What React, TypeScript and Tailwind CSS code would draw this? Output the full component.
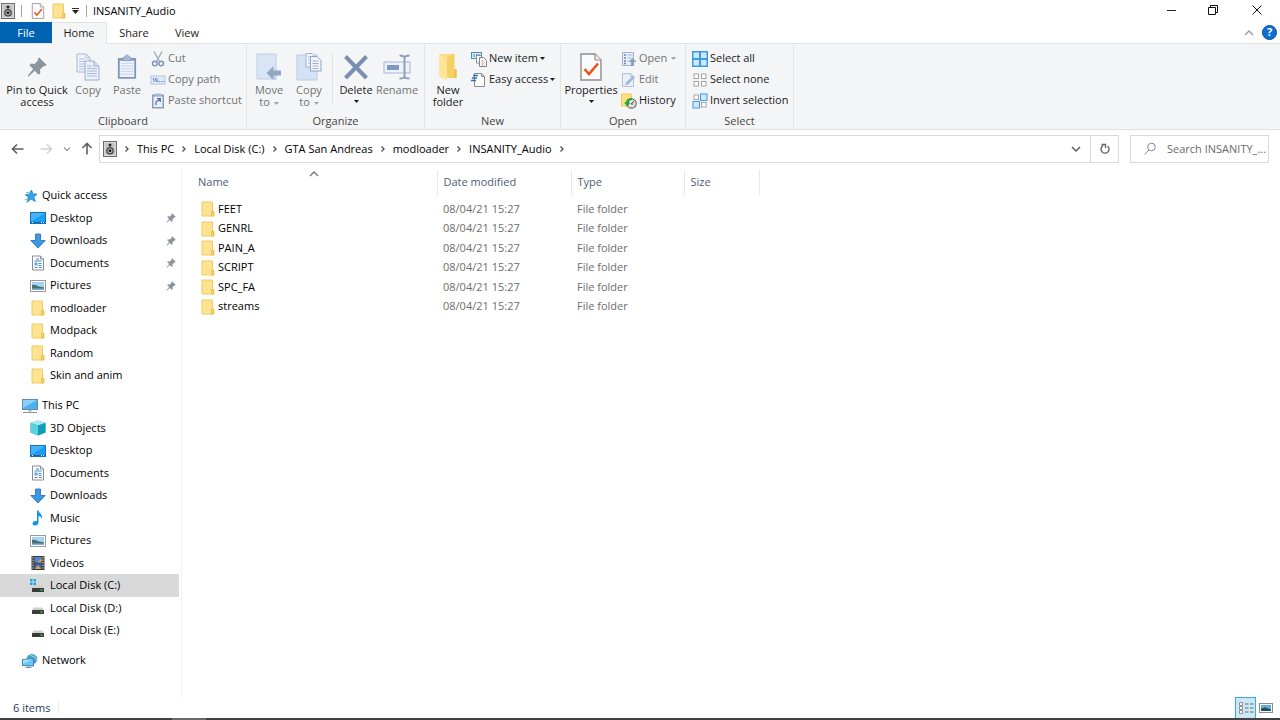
import { useState, type ReactNode } from 'react';

type IconProps = { className?: string };

const SMALL = 'h-4 w-4 shrink-0';

function SpeakerIcon({ className = 'h-4 w-[14px] shrink-0' }: IconProps) {
  return (
    <svg viewBox="0 0 14 16" className={className} aria-hidden="true">
      <rect x="0.5" y="0.5" width="13" height="15" fill="#dadada" stroke="#6c6c6c" />
      <rect x="2" y="2" width="10" height="12" fill="#c4c4c4" />
      <circle cx="7" cy="4" r="1.5" fill="#222" />
      <circle cx="7" cy="9.8" r="3.8" fill="#444" />
      <circle cx="7" cy="9.8" r="2.5" fill="#b0b0b0" />
      <circle cx="7" cy="9.8" r="1.3" fill="#111" />
    </svg>
  );
}

function PropertiesIcon({ className = SMALL }: IconProps) {
  return (
    <svg viewBox="0 0 22 28" className={className} aria-hidden="true">
      <path d="M1 1h14l6 6v20H1z" fill="#fbfbfb" stroke="#8d8d8d" strokeWidth="1.4" />
      <path d="M15 1v6h6" fill="#eee" stroke="#8d8d8d" strokeWidth="1.2" />
      <path d="M4.5 16l4.5 5 9-10.500" fill="none" stroke="#e9541b" strokeWidth="2.6" />
    </svg>
  );
}

function FolderIcon({ className = 'h-4 w-[14px] shrink-0' }: IconProps) {
  return (
    <svg viewBox="0 0 14 16" className={className} aria-hidden="true">
      <path d="M1 1h10.500v9.500h1.500V15H1z" fill="#ffe391" stroke="#eccb60" />
      <path d="M10.500 10.500h2V15h-2z" fill="#fbd768" stroke="#e3bb4a" strokeWidth="0.8" />
    </svg>
  );
}

function PinIcon({ className = SMALL }: IconProps) {
  return (
    <svg viewBox="0 0 20 20" className={className} aria-hidden="true">
      <path
        d="M12.200 0.500l7.300 7.200-1.500 1.500-1.300-.3-3.700 3.700.3 3.600-1.600 1.600-4-4L1.500 19.400.6 18.800l5.600-6.700-3.900-3.900 1.700-1.600 3.600.3 3.600-3.600-.4-1.400z"
        fill="#8b959d"
      />
    </svg>
  );
}

function CopyIcon({ className }: IconProps) {
  return (
    <svg viewBox="0 0 24 28" className={className} aria-hidden="true">
      <path d="M1 1h9l4 4v14H1z" fill="#eef3fb" stroke="#a9b9d6" />
      <path d="M10 1v4h4M3 6h6M3 8.500h9M3 11h9M3 13.500h9M3 16h9" fill="none" stroke="#b4c3de" />
      <path d="M9 8h9l5 5v14H9z" fill="#eaf1fb" stroke="#9aadcd" />
      <path d="M18 8v5h5" fill="#d5e0f1" stroke="#9aadcd" />
      <path d="M11 13h5M11 15.500h10M11 18h10M11 20.500h10M11 23h10" stroke="#a9badb" />
    </svg>
  );
}

function PasteIcon({ className }: IconProps) {
  return (
    <svg viewBox="0 0 22 28" className={className} aria-hidden="true">
      <rect x="1" y="4" width="20" height="23" rx="1" fill="#7f95bc" />
      <rect x="3" y="7" width="16" height="18" fill="#edf3fc" />
      <path d="M7 3h2c0-3 4-3 4 0h2l1 4H6z" fill="#a9b8d2" stroke="#8399bf" strokeWidth="0.8" />
      <path d="M4 10h14M4 13h14M4 16h14M4 19h14M4 22h14" stroke="#c5d3ea" />
    </svg>
  );
}

function CutIcon({ className = SMALL }: IconProps) {
  return (
    <svg viewBox="0 0 16 16" className={className} aria-hidden="true">
      <path d="M4 0.500l5.800 10.500M12 0.500L6.200 11" stroke="#a5b0c0" strokeWidth="1.500" />
      <circle cx="4.800" cy="12.500" r="2.300" fill="none" stroke="#8294b8" strokeWidth="1.500" />
      <circle cx="11.200" cy="12.500" r="2.300" fill="none" stroke="#8294b8" strokeWidth="1.500" />
    </svg>
  );
}

function CopyPathIcon({ className = SMALL }: IconProps) {
  return (
    <svg viewBox="0 0 16 16" className={className} aria-hidden="true">
      <rect x="1" y="4" width="14" height="8" fill="#e1eaf8" stroke="#b3c2dc" />
      <path d="M3 6l1.500 4M5 6l1.500 4M6.500 6L8 10" stroke="#7088b3" />
      <path d="M9 9.500h1.200M11 9.500h1.200M13 9.500h1.200" stroke="#7088b3" />
    </svg>
  );
}

function PasteShortcutIcon({ className = SMALL }: IconProps) {
  return (
    <svg viewBox="0 0 16 16" className={className} aria-hidden="true">
      <rect x="2" y="1.500" width="12" height="14" fill="#8a9dc1" />
      <rect x="5" y="0.500" width="6" height="2.500" fill="#a9b8d2" />
      <rect x="3.500" y="3.500" width="9" height="10.500" fill="#e9f0fb" />
      <path d="M6 12V9l4-3M7 5.700h3.300V9" fill="none" stroke="#5872a4" strokeWidth="1.300" />
    </svg>
  );
}

function MoveToIcon({ className }: IconProps) {
  return (
    <svg viewBox="0 0 26 28" className={className} aria-hidden="true">
      <rect x="1" y="1" width="19" height="25" fill="#d9e4f5" stroke="#c0cfe6" />
      <path d="M18 16h2v11h-2z" fill="#c2d1e9" />
      <path d="M10.500 20l7-7v4.500H25v5h-7.500V27z" fill="#94a6c6" />
    </svg>
  );
}

function CopyToIcon({ className }: IconProps) {
  return (
    <svg viewBox="0 0 26 28" className={className} aria-hidden="true">
      <rect x="1" y="2" width="20" height="25" fill="#d5e1f4" stroke="#bccbe4" />
      <path d="M10 .5h6l3 3V14h-9z" fill="#f3f7fd" stroke="#9fb1d0" />
      <path d="M14.500 3.500h6.500l4 4V18H14.500z" fill="#f3f7fd" stroke="#8fa3c7" />
      <path d="M16.500 8h6M16.500 10.500h6M16.500 13h6M16.500 15.500h6M12 4h2M12 7h2M12 10h2" stroke="#9db0d3" />
    </svg>
  );
}

function DeleteIcon({ className }: IconProps) {
  return (
    <svg viewBox="0 0 26 28" className={className} aria-hidden="true">
      <path d="M2.500 3.500L23.500 25M23.500 3.500L2.500 25" stroke="#7b8eb3" strokeWidth="4" />
    </svg>
  );
}

function RenameIcon({ className }: IconProps) {
  return (
    <svg viewBox="0 0 28 28" className={className} aria-hidden="true">
      <rect x="1" y="9" width="26" height="11" fill="#edf3fc" stroke="#a5b7d6" />
      <rect x="4" y="12" width="12" height="5" fill="#8297bf" />
      <path d="M16.500 2.500c3 0 5 .5 5 2.500v18c0 2-2 2.500-5 2.500M26.500 2.500c-3 0-5 .5-5 2.500v18c0 2 2 2.500 5 2.500" fill="none" stroke="#8d9fbe" strokeWidth="2" />
    </svg>
  );
}

function NewFolderIcon({ className }: IconProps) {
  return (
    <svg viewBox="0 0 20 28" className={className} aria-hidden="true">
      <path d="M3 1h13.500v15h2v9H3z" fill="#f6cf65" />
      <path d="M1 1l8 4v22l-8-3.500z" fill="#ffe49a" />
      <path d="M9 5l6-4H1z" fill="#fbdc84" />
      <path d="M16.500 16h2v9h-2z" fill="#edbf4c" />
    </svg>
  );
}

function NewItemIcon({ className = SMALL }: IconProps) {
  return (
    <svg viewBox="0 0 16 16" className={className} aria-hidden="true">
      <rect x="0.500" y="1.500" width="10" height="6" fill="#d6edf8" stroke="#4a8db5" />
      <path d="M3 3v3M5.500 3v3M8 3v3" stroke="#3b87b4" />
      <path d="M5.500 4.500h5V12h-5z" fill="#f8f8f8" stroke="#8e8e8e" />
      <path d="M8.500 6.500h4l3 3v6h-7z" fill="#fff" stroke="#858585" />
      <path d="M10 10h4M10 12h4M10 14h4M11.500 9v6" stroke="#d9b3ad" strokeWidth="0.800" />
    </svg>
  );
}

function EasyAccessIcon({ className = SMALL }: IconProps) {
  return (
    <svg viewBox="0 0 16 16" className={className} aria-hidden="true">
      <path d="M3.500 1.500h7l3 3v10h-10z" fill="#fbfbfb" stroke="#8c8c8c" />
      <path d="M10.500 1.500v3h3" fill="none" stroke="#8c8c8c" />
      <path d="M2 3.500h5M1 6h5M0 8.500h5" stroke="#2c73b3" strokeWidth="1.400" />
    </svg>
  );
}

function OpenIcon({ className = SMALL }: IconProps) {
  return (
    <svg viewBox="0 0 16 16" className={className} aria-hidden="true">
      <rect x="1.500" y="1.500" width="11" height="13" fill="#e6eefa" stroke="#a5b5d1" />
      <path d="M3 4h2M3 7h2M3 10h2M3 12.500h2" stroke="#6d86b5" strokeWidth="1.600" />
      <path d="M6.500 4h5M6.500 7h4M6.500 10h2" stroke="#a9badb" />
      <path d="M11.500 7l4 4h-2.500v4h-3v-4H7.500z" fill="#8a9dc1" />
    </svg>
  );
}

function EditIcon({ className = SMALL }: IconProps) {
  return (
    <svg viewBox="0 0 16 16" className={className} aria-hidden="true">
      <path d="M1.500 1.500h8l3 3v10h-11z" fill="#e9f0fb" stroke="#b3c2dc" />
      <path d="M9.500 1.500v3h3" fill="none" stroke="#b3c2dc" />
      <path d="M4 13.500l1-3 7-7 2 2-7 7z" fill="#a9b8d2" />
    </svg>
  );
}

function HistoryIcon({ className = SMALL }: IconProps) {
  return (
    <svg viewBox="0 0 16 16" className={className} aria-hidden="true">
      <path d="M0.500 1h10v12h-10z" fill="#ffe07a" stroke="#e9c452" strokeWidth="0.800" />
      <circle cx="10.500" cy="10.500" r="4.700" fill="#e4e4e4" stroke="#707070" strokeWidth="1.200" />
      <path d="M10 11l3-3M10 11h2.500" stroke="#555" />
      <path d="M11 5.200C7 4.500 5 7 4.800 9.500H3l3.500 4 3-4H7.600C8 8 9 7 11 7z" fill="#22a53c" />
    </svg>
  );
}

function SelectIcon({ filled }: { filled: boolean[] }) {
  const spots = [
    [1, 1],
    [8.5, 1],
    [1, 8.5],
    [8.5, 8.5],
  ];
  return (
    <svg viewBox="0 0 16 16" className={SMALL} aria-hidden="true">
      {filled.every(Boolean) && <rect width="16" height="16" fill="#3d9ae6" />}
      {spots.map(([x, y], i) =>
        filled[i] ? (
          <rect key={i} x={x} y={y} width="6.500" height="6.500" fill="#cdeafc" stroke="#3d9ae6" />
        ) : (
          <rect key={i} x={x + 1} y={y + 1} width="4.500" height="4.500" fill="#fff" stroke="#a3a3a3" />
        ),
      )}
    </svg>
  );
}

function StarIcon() {
  return (
    <svg viewBox="0 0 16 16" className="h-4 w-4 shrink-0" aria-hidden="true">
      <path d="M9.500 2l1.300 3.900 4.200.2-3.200 2.800 1.500 4.600-4.200-2.400-3.800 2.900 1-4.800-3-2.500 3.900-.5z" fill="#35a4e8" stroke="#2080c4" strokeWidth="0.800" />
      <path d="M4 4.500h3M3 11.500h3M4 14h2" stroke="#74bfea" />
    </svg>
  );
}

function DesktopIcon() {
  return (
    <svg viewBox="0 0 16 16" className={SMALL} aria-hidden="true">
      <rect x="0.500" y="2.500" width="15" height="11" fill="#1e9bf5" stroke="#1272be" />
      <path d="M1 3h14L1 12z" fill="#45b3fb" />
      <path d="M1 12.500h14" stroke="#0f62a8" />
      <path d="M2 12.500h1M11 12.500h1M13 12.500h1" stroke="#fff" />
    </svg>
  );
}

function DownloadIcon() {
  return (
    <svg viewBox="0 0 16 16" className={SMALL} aria-hidden="true">
      <path d="M5.500 1h5v6.500h4.700L8 15 .8 7.500h4.700z" fill="#3c97e4" stroke="#246db4" strokeWidth="0.800" />
    </svg>
  );
}

function DocumentIcon() {
  return (
    <svg viewBox="0 0 16 16" className={SMALL} aria-hidden="true">
      <path d="M2.500 1h8l3 3v11h-11z" fill="#fff" stroke="#8b8b8b" />
      <path d="M10.500 1v3h3" fill="#eee" stroke="#8b8b8b" />
      <path d="M6 4h3M4.500 6h7" stroke="#3d8ac7" />
      <rect x="4.500" y="7.500" width="3" height="3" fill="#5ba9df" />
      <path d="M8.500 8.500h3M8.500 10.500h3M4.500 12.500h3M9 12.500h3" stroke="#4c8dc0" />
    </svg>
  );
}

function PictureIcon() {
  return (
    <svg viewBox="0 0 16 16" className={SMALL} aria-hidden="true">
      <rect x="0.500" y="2.500" width="15" height="11" fill="#fff" stroke="#9a9a9a" />
      <rect x="2" y="4" width="12" height="8" fill="#a5d3f5" />
      <path d="M2 7c3-1 5 1 7 1.500s4 .5 5 1V11H2z" fill="#48726d" />
      <path d="M2 10.500h12V12H2z" fill="#7fb0dc" />
    </svg>
  );
}

function MonitorIcon() {
  return (
    <svg viewBox="0 0 16 16" className={SMALL} aria-hidden="true">
      <rect x="0.500" y="1.500" width="15" height="10" fill="#4cb1f0" stroke="#6a8ba5" />
      <path d="M1 2h14L1 10z" fill="#8bd0f8" />
      <path d="M6.500 12h3v1.500h-3z" fill="#9fb0bd" />
      <path d="M1 14.500h14" stroke="#84949f" />
    </svg>
  );
}

function CubeIcon() {
  return (
    <svg viewBox="0 0 16 16" className={SMALL} aria-hidden="true">
      <path d="M8 .5l7.500 2.500v9.500L8 15.500.5 12.500V3z" fill="#27b4cc" />
      <path d="M8 .5L15.500 3 8 5.500.5 3z" fill="#a4e9f0" />
      <path d="M.5 3L8 5.500v10L.5 12.500z" fill="#5ed0de" />
      <path d="M8 5.500L15.500 3v9.500L8 15.500z" fill="#119db9" />
    </svg>
  );
}

function MusicIcon() {
  return (
    <svg viewBox="0 0 16 16" className={SMALL} aria-hidden="true">
      <path d="M7 .5h1.500c.5 3 4.500 3.500 3.500 8.500-.5-2-1.800-3-3.500-3v6.500c0 2-1.700 3-3.500 3-1.500 0-2.500-.8-2.500-2 0-1.700 2-2.900 4.500-2.300z" fill="#0f94e8" />
    </svg>
  );
}

function VideoIcon() {
  return (
    <svg viewBox="0 0 16 16" className={SMALL} aria-hidden="true">
      <rect x="1.500" y="1" width="13" height="14" fill="#3a3a3a" />
      <rect x="4.500" y="2" width="7" height="5.500" fill="#4d86dc" />
      <rect x="4.500" y="8.500" width="7" height="5.500" fill="#3765b5" />
      <path d="M7 7.500l4.500-4v4zM5 14l3-4 3 4z" fill="#dda43b" />
      <path d="M3 2v12M13 2v12" stroke="#eee" strokeDasharray="1.300 1.300" />
    </svg>
  );
}

function DriveIcon({ system = false }: { system?: boolean }) {
  return (
    <svg viewBox="0 0 16 16" className={SMALL} aria-hidden="true">
      {system && <path d="M0 1h2.500v2.500H0zM3.500 1H6v2.500H3.500zM0 4.500h2.500V7H0zM3.500 4.500H6V7H3.500z" fill="#18a8e8" />}
      <path d="M3.500 7.500h9l1.500 3H2z" fill="#d0d0d0" />
      <rect x="2" y="10" width="12" height="4" rx="0.500" fill="#3b3b3b" />
      <rect x="10.500" y="11.300" width="2" height="1.500" fill="#35d14a" />
    </svg>
  );
}

function NetworkIcon() {
  return (
    <svg viewBox="0 0 16 16" className={SMALL} aria-hidden="true">
      <circle cx="10" cy="6" r="5.300" fill="#4a9fce" />
      <path d="M8 2c2 0 2 2 4 2s1 3 3 3M10 1c2 0 3 1 4 2" stroke="#b3dcef" fill="none" />
      <path d="M.5 6.500l11-1V13L.5 12.500z" fill="#6cc5f3" stroke="#3583b3" />
      <path d="M1 7l9-.8-9 4.800z" fill="#a9e0fb" />
      <path d="M3.500 14.500h6M6 13v2" stroke="#78909f" />
    </svg>
  );
}

function Chevron({ dir, className }: { dir: 'up' | 'down' | 'right'; className?: string }) {
  const d = { up: 'M1 6l4-4 4 4', down: 'M1 2l4 4 4-4', right: 'M3.500 1.500L6 4 3.500 6.500' }[dir];
  return (
    <svg viewBox="0 0 10 8" className={`h-2 w-[10px] shrink-0 ${className ?? ''}`} aria-hidden="true">
      <path d={d} fill="none" stroke="currentColor" strokeWidth="1.400" />
    </svg>
  );
}

function Caret({ className }: IconProps) {
  return (
    <svg viewBox="0 0 5 3" className={`h-[3px] w-[5px] shrink-0 ${className ?? ''}`} aria-hidden="true">
      <path d="M0 0h5L2.500 3z" fill="currentColor" />
    </svg>
  );
}

function Arrow({ dir, className }: { dir: 'left' | 'right' | 'up'; className?: string }) {
  const d = {
    left: 'M12.500 7H1.500M6 2.500L1.500 7 6 11.500',
    right: 'M1.500 7h11M8 2.500L12.500 7 8 11.500',
    up: 'M7 12.500v-11M2.500 6L7 1.500 11.500 6',
  }[dir];
  return (
    <svg viewBox="0 0 14 14" className={`h-[14px] w-[14px] ${className ?? ''}`} aria-hidden="true">
      <path d={d} fill="none" stroke="currentColor" strokeWidth="1.600" />
    </svg>
  );
}

// a "\n" in the label starts its second line
function LargeButton({
  icon,
  label,
  width,
  menu,
  disabled,
}: {
  icon: ReactNode;
  label: string;
  width: string;
  menu?: boolean;
  disabled?: boolean;
}) {
  const twoLines = label.includes('\n');
  return (
    <button
      type="button"
      disabled={disabled}
      className={`flex ${width} shrink-0 flex-col items-center pt-2 leading-3 disabled:text-[#727272]`}
    >
      <span className="mb-[3px] flex h-7 items-center justify-center">{icon}</span>
      <span className="text-center whitespace-pre">
        {label}
        {menu && twoLines && <Caret className="ml-1 inline-block align-middle text-[#a0a0a0]" />}
      </span>
      {menu && !twoLines && <Caret className="mt-1" />}
    </button>
  );
}

function SmallButton({ icon, label, menu, disabled }: { icon: ReactNode; label: string; menu?: boolean; disabled?: boolean }) {
  return (
    <button
      type="button"
      disabled={disabled}
      className="flex h-[21px] items-center gap-[2px] pl-[2px] whitespace-nowrap disabled:text-[#727272]"
    >
      {icon}
      {label}
      {menu && <Caret className={disabled ? 'ml-[2px] text-[#a0a0a0]' : ''} />}
    </button>
  );
}

function RibbonGroup({ title, width, children }: { title: string; width: string; children: ReactNode }) {
  return (
    <section className={`flex ${width} shrink-0 flex-col border-r border-[#e2e3e4]`}>
      <div className="flex h-[69px]">{children}</div>
      <h2 className="text-center leading-4 text-[#444]">{title}</h2>
    </section>
  );
}

type NavItem = { label: string; icon: ReactNode; pinned?: boolean; selected?: boolean };

const quickAccess: NavItem[] = [
  { label: 'Desktop', icon: <DesktopIcon />, pinned: true },
  { label: 'Downloads', icon: <DownloadIcon />, pinned: true },
  { label: 'Documents', icon: <DocumentIcon />, pinned: true },
  { label: 'Pictures', icon: <PictureIcon />, pinned: true },
  { label: 'modloader', icon: <FolderIcon className={SMALL} /> },
  { label: 'Modpack', icon: <FolderIcon className={SMALL} /> },
  { label: 'Random', icon: <FolderIcon className={SMALL} /> },
  { label: 'Skin and anim', icon: <FolderIcon className={SMALL} /> },
];

const thisPc: NavItem[] = [
  { label: '3D Objects', icon: <CubeIcon /> },
  { label: 'Desktop', icon: <DesktopIcon /> },
  { label: 'Documents', icon: <DocumentIcon /> },
  { label: 'Downloads', icon: <DownloadIcon /> },
  { label: 'Music', icon: <MusicIcon /> },
  { label: 'Pictures', icon: <PictureIcon /> },
  { label: 'Videos', icon: <VideoIcon /> },
  { label: 'Local Disk (C:)', icon: <DriveIcon system />, selected: true },
  { label: 'Local Disk (D:)', icon: <DriveIcon /> },
  { label: 'Local Disk (E:)', icon: <DriveIcon /> },
];

function NavSection({ label, icon, items = [] }: { label: string; icon: ReactNode; items?: NavItem[] }) {
  return (
    <ul className="mb-[7px]">
      <li className="h-[23px]">
        <a href="#" className="flex h-full items-center gap-1 pl-[22px]">
          {icon}
          {label}
        </a>
      </li>
      {items.map((item) => (
        <li key={item.label} className="odd:h-[23px] even:h-[22px]">
          <a
            href="#"
            className={`mr-[2px] flex h-full items-center gap-1 pr-[3px] pl-[30px] ${item.selected ? 'bg-[#d9d9d9]' : ''}`}
          >
            {item.icon}
            <span className="flex-1">{item.label}</span>
            {item.pinned && <PinIcon className="h-[10px] w-[10px]" />}
          </a>
        </li>
      ))}
    </ul>
  );
}

const crumbs = ['This PC', 'Local Disk (C:)', 'GTA San Andreas', 'modloader', 'INSANITY_Audio'];

const folders = ['FEET', 'GENRL', 'PAIN_A', 'SCRIPT', 'SPC_FA', 'streams'];

export default function App() {
  const [query, setQuery] = useState('');

  return (
    <div className="flex min-h-screen flex-col bg-white font-['Open_Sans','Noto_Sans',sans-serif] text-[11px] text-[#1b1b1b]">
      <header className="flex h-[22px] items-center pl-px">
        <SpeakerIcon className="h-4 w-[14px]" />
        <span className="ml-[6px] h-3 w-px bg-[#a5a5a5]" />
        <button type="button" aria-label="Properties" className="ml-2">
          <PropertiesIcon />
        </button>
        <button type="button" aria-label="New folder" className="ml-[6px]">
          <FolderIcon />
        </button>
        <button type="button" aria-label="Customize Quick Access Toolbar" className="ml-[6px] flex flex-col items-center gap-px">
          <span className="h-px w-[7px] bg-[#333]" />
          <svg viewBox="0 0 7 4" className="h-1 w-[7px]" aria-hidden="true">
            <path d="M0 0h7L3.500 4z" fill="#222" />
          </svg>
        </button>
        <span className="ml-[7px] h-3 w-px bg-[#a5a5a5]" />
        <h1 className="ml-[6px] text-black">INSANITY_Audio</h1>
        <div className="ml-auto flex self-start">
          <button type="button" aria-label="Minimize" className="flex h-5 w-[42px] items-center justify-center">
            <span className="h-px w-[9px] bg-[#222]" />
          </button>
          <button type="button" aria-label="Restore" className="flex h-5 w-[42px] items-center justify-center">
            <svg viewBox="0 0 10 10" className="h-[10px] w-[10px]" fill="none" stroke="#111" aria-hidden="true">
              <path d="M0.500 2.500h7v7h-7zM2.500 2.500v-2h7v7h-2" />
            </svg>
          </button>
          <button type="button" aria-label="Close" className="flex h-5 w-[46px] items-center justify-center">
            <svg viewBox="0 0 10 10" className="h-[10px] w-[10px]" fill="none" stroke="#111" aria-hidden="true">
              <path d="M0.500 0.500l9 9M9.500 0.500l-9 9" />
            </svg>
          </button>
        </div>
      </header>

      <nav className="flex h-[22px] items-stretch border-b border-[#e1e2e4]">
        <button type="button" className="w-[52px] bg-[#0063b1] pt-px text-white">
          File
        </button>
        <button type="button" className="-mb-px w-[55px] border-t border-r border-[#e1e2e4] bg-[#f4f5f7]">
          Home
        </button>
        <button type="button" className="w-[54px] pt-px">
          Share
        </button>
        <button type="button" className="w-[52px] pt-px">
          View
        </button>
        <div className="ml-auto flex items-center gap-1 pr-[3px]">
          <button type="button" aria-label="Minimize the Ribbon" className="p-1">
            <Chevron dir="up" className="text-[#9a9a9a]" />
          </button>
          <button
            type="button"
            aria-label="Help"
            className="flex h-[15px] w-[15px] items-center justify-center rounded-full border border-[#0a4f9c] bg-[#0f6fd0] font-bold text-white"
          >
            ?
          </button>
        </div>
      </nav>

      <div className="flex h-[86px] border-b border-[#dfe0e1] bg-[#f4f5f7] pt-px">
        <RibbonGroup title="Clipboard" width="w-[247px]">
          <div className="w-1 shrink-0" />
          <LargeButton icon={<PinIcon className="h-5 w-5" />} label={'Pin to Quick\naccess'} width="w-[66px]" />
          <LargeButton icon={<CopyIcon className="h-7 w-6" />} label="Copy" width="w-[36px]" disabled />
          <LargeButton icon={<PasteIcon className="h-7 w-[20px]" />} label="Paste" width="w-[42px]" disabled />
          <div className="flex flex-col pt-[3px]">
            <SmallButton icon={<CutIcon />} label="Cut" disabled />
            <SmallButton icon={<CopyPathIcon />} label="Copy path" disabled />
            <SmallButton icon={<PasteShortcutIcon />} label="Paste shortcut" disabled />
          </div>
        </RibbonGroup>
        <RibbonGroup title="Organize" width="w-[178px]">
          <div className="w-[2px] shrink-0" />
          <LargeButton icon={<MoveToIcon className="h-7 w-[26px]" />} label={'Move\nto'} width="w-[40px]" menu disabled />
          <LargeButton icon={<CopyToIcon className="h-7 w-[26px]" />} label={'Copy\nto'} width="w-[40px]" menu disabled />
          <div className="mx-[3px] mt-2 h-[52px] w-px shrink-0 bg-[#e2e3e4]" />
          <LargeButton icon={<DeleteIcon className="h-7 w-[26px]" />} label="Delete" width="w-[40px]" menu />
          <LargeButton icon={<RenameIcon className="h-7 w-7" />} label="Rename" width="w-[42px]" disabled />
        </RibbonGroup>
        <RibbonGroup title="New" width="w-[136px]">
          <div className="w-[2px] shrink-0" />
          <LargeButton icon={<NewFolderIcon className="h-7 w-5" />} label={'New\nfolder'} width="w-[42px]" />
          <div className="flex flex-col pt-[3px]">
            <SmallButton icon={<NewItemIcon />} label="New item" menu />
            <SmallButton icon={<EasyAccessIcon />} label="Easy access" menu />
          </div>
        </RibbonGroup>
        <RibbonGroup title="Open" width="w-[125px]">
          <div className="w-[2px] shrink-0" />
          <LargeButton icon={<PropertiesIcon className="h-7 w-[22px]" />} label="Properties" width="w-[56px]" menu />
          <div className="flex flex-col pt-[3px]">
            <SmallButton icon={<OpenIcon />} label="Open" menu disabled />
            <SmallButton icon={<EditIcon />} label="Edit" disabled />
            <SmallButton icon={<HistoryIcon />} label="History" />
          </div>
        </RibbonGroup>
        <RibbonGroup title="Select" width="w-[108px]">
          <div className="flex flex-col pt-[3px] pl-1">
            <SmallButton icon={<SelectIcon filled={[true, true, true, true]} />} label="Select all" />
            <SmallButton icon={<SelectIcon filled={[false, false, false, false]} />} label="Select none" />
            <SmallButton icon={<SelectIcon filled={[false, true, true, false]} />} label="Invert selection" />
          </div>
        </RibbonGroup>
      </div>

      <div className="flex h-[38px] items-center pr-[11px] pl-[11px]">
        <button type="button" aria-label="Back" className="w-[28px]">
          <Arrow dir="left" className="text-[#5f5f5f]" />
        </button>
        <button type="button" aria-label="Forward" className="w-[23px]" disabled>
          <Arrow dir="right" className="text-[#d3d3d3]" />
        </button>
        <button type="button" aria-label="Recent locations" className="w-[18px]">
          <Chevron dir="down" className="h-[6px] text-[#777]" />
        </button>
        <button type="button" aria-label="Up" className="w-[19px]">
          <Arrow dir="up" className="text-[#5f5f5f]" />
        </button>
        <div className="flex h-7 flex-1 items-center border border-[#d9d9d9] pl-[3px]">
          <SpeakerIcon />
          <ol className="flex flex-1 items-center text-black">
            {crumbs.map((crumb) => (
              <li key={crumb} className="flex items-center">
                <Chevron dir="right" className="mx-[5px] text-[#555]" />
                <a href="#">{crumb}</a>
              </li>
            ))}
            <li>
              <Chevron dir="right" className="mx-[5px] text-[#555]" />
            </li>
          </ol>
          <button type="button" aria-label="Previous locations" className="flex w-7 justify-center">
            <Chevron dir="down" className="text-[#555]" />
          </button>
          <button type="button" aria-label="Refresh" className="flex h-full w-7 items-center justify-center border-l border-[#d9d9d9]">
            <svg viewBox="0 0 12 12" className="h-3 w-3" aria-hidden="true">
              <path d="M8.500 3A4 4 0 1 1 4 2.700M2.500 1.500h4v3.500" fill="none" stroke="#666" strokeWidth="1.400" />
            </svg>
          </button>
        </div>
        <label className="ml-[11px] flex h-7 w-[139px] items-center border border-[#d9d9d9] pl-3">
          <svg viewBox="0 0 14 14" className="h-[14px] w-[14px] shrink-0" aria-hidden="true">
            <circle cx="8.500" cy="5" r="3.800" fill="none" stroke="#8b8590" />
            <path d="M6 8L1.500 12.500" stroke="#8b8590" />
          </svg>
          <input
            type="text"
            aria-label="Search INSANITY_Audio"
            placeholder="Search INSANITY_..."
            value={query}
            onChange={(e) => setQuery(e.target.value)}
            className="ml-[10px] w-full min-w-0 outline-none placeholder:text-[#6b6b6b]"
          />
        </label>
      </div>

      <div className="flex flex-1">
        <aside className="w-[182px] shrink-0 border-r border-[#f2f2f2] pt-4 text-black">
          <NavSection label="Quick access" icon={<StarIcon />} items={quickAccess} />
          <NavSection label="This PC" icon={<MonitorIcon />} items={thisPc} />
          <NavSection label="Network" icon={<NetworkIcon />} />
        </aside>

        <main className="flex-1 pt-[2px] pl-[10px]">
          <table className="table-fixed border-collapse text-left text-[#6d6d6d]">
            <colgroup>
              <col className="w-[245px]" />
              <col className="w-[134px]" />
              <col className="w-[113px]" />
              <col className="w-[75px]" />
            </colgroup>
            <thead>
              <tr className="h-[25px] text-[#4c607a]">
                <th className="relative border-r border-[#e8e8e8] py-0 pl-[6px] font-normal">
                  Name
                  <Chevron dir="up" className="absolute top-0 left-1/2 -translate-x-1/2 text-[#777]" />
                </th>
                <th className="border-r border-[#e8e8e8] py-0 pl-[6px] font-normal">Date modified</th>
                <th className="border-r border-[#e8e8e8] py-0 pl-[6px] font-normal">Type</th>
                <th className="border-r border-[#e8e8e8] py-0 pl-[6px] font-normal">Size</th>
              </tr>
              <tr className="h-1" />
            </thead>
            <tbody>
              {folders.map((name) => (
                <tr key={name} className="odd:h-5 even:h-[19px]">
                  <td className="py-0 pl-[9px] text-black">
                    <span className="flex items-center gap-[3px]">
                      <FolderIcon />
                      {name}
                    </span>
                  </td>
                  <td className="py-0 pl-[6px]">08/04/21 15:27</td>
                  <td className="py-0 pl-[6px]">File folder</td>
                  <td />
                </tr>
              ))}
            </tbody>
          </table>
        </main>
      </div>

      <footer className="flex h-[21px] items-stretch pr-1 pl-[13px] text-[#1e395b]">
        <span className="flex items-center pt-px">6 items</span>
        <span className="my-1 ml-2 w-px bg-[#eee]" />
        <div className="ml-auto flex">
          <button
            type="button"
            aria-label="Details view"
            className="flex w-[21px] items-center justify-center border border-b-0 border-[#3aa9d8] bg-[#cbe8f6]"
          >
            <svg viewBox="0 0 16 14" className="h-[14px] w-4" aria-hidden="true">
              <path d="M1.500 1.500h3v3h-3zM1.500 5.500h3v3h-3zM1.500 9.500h3v3h-3z" fill="#fff" stroke="#8d8d8d" />
              <path d="M7 3h3.500M12 3h3.500M7 7h3.500M12 7h3.500M7 11h3.500M12 11h3.500" stroke="#666" />
            </svg>
          </button>
          <button type="button" aria-label="Large icons view" className="flex w-[20px] items-center justify-center">
            <svg viewBox="0 0 14 12" className="h-3 w-[14px]" aria-hidden="true">
              <rect x="0.500" y="1.500" width="13" height="9" fill="#fff" stroke="#8b8b8b" />
              <rect x="2" y="3" width="10" height="6" fill="#5fa6ea" />
              <path d="M2 6.500l4-1 6 2V9H2z" fill="#274f4b" />
            </svg>
          </button>
        </div>
      </footer>
      <div className="flex h-[2px] bg-[#414141] pl-[172px]">
        <span className="w-[34px] bg-[#6a6a6a]" />
      </div>
    </div>
  );
}
